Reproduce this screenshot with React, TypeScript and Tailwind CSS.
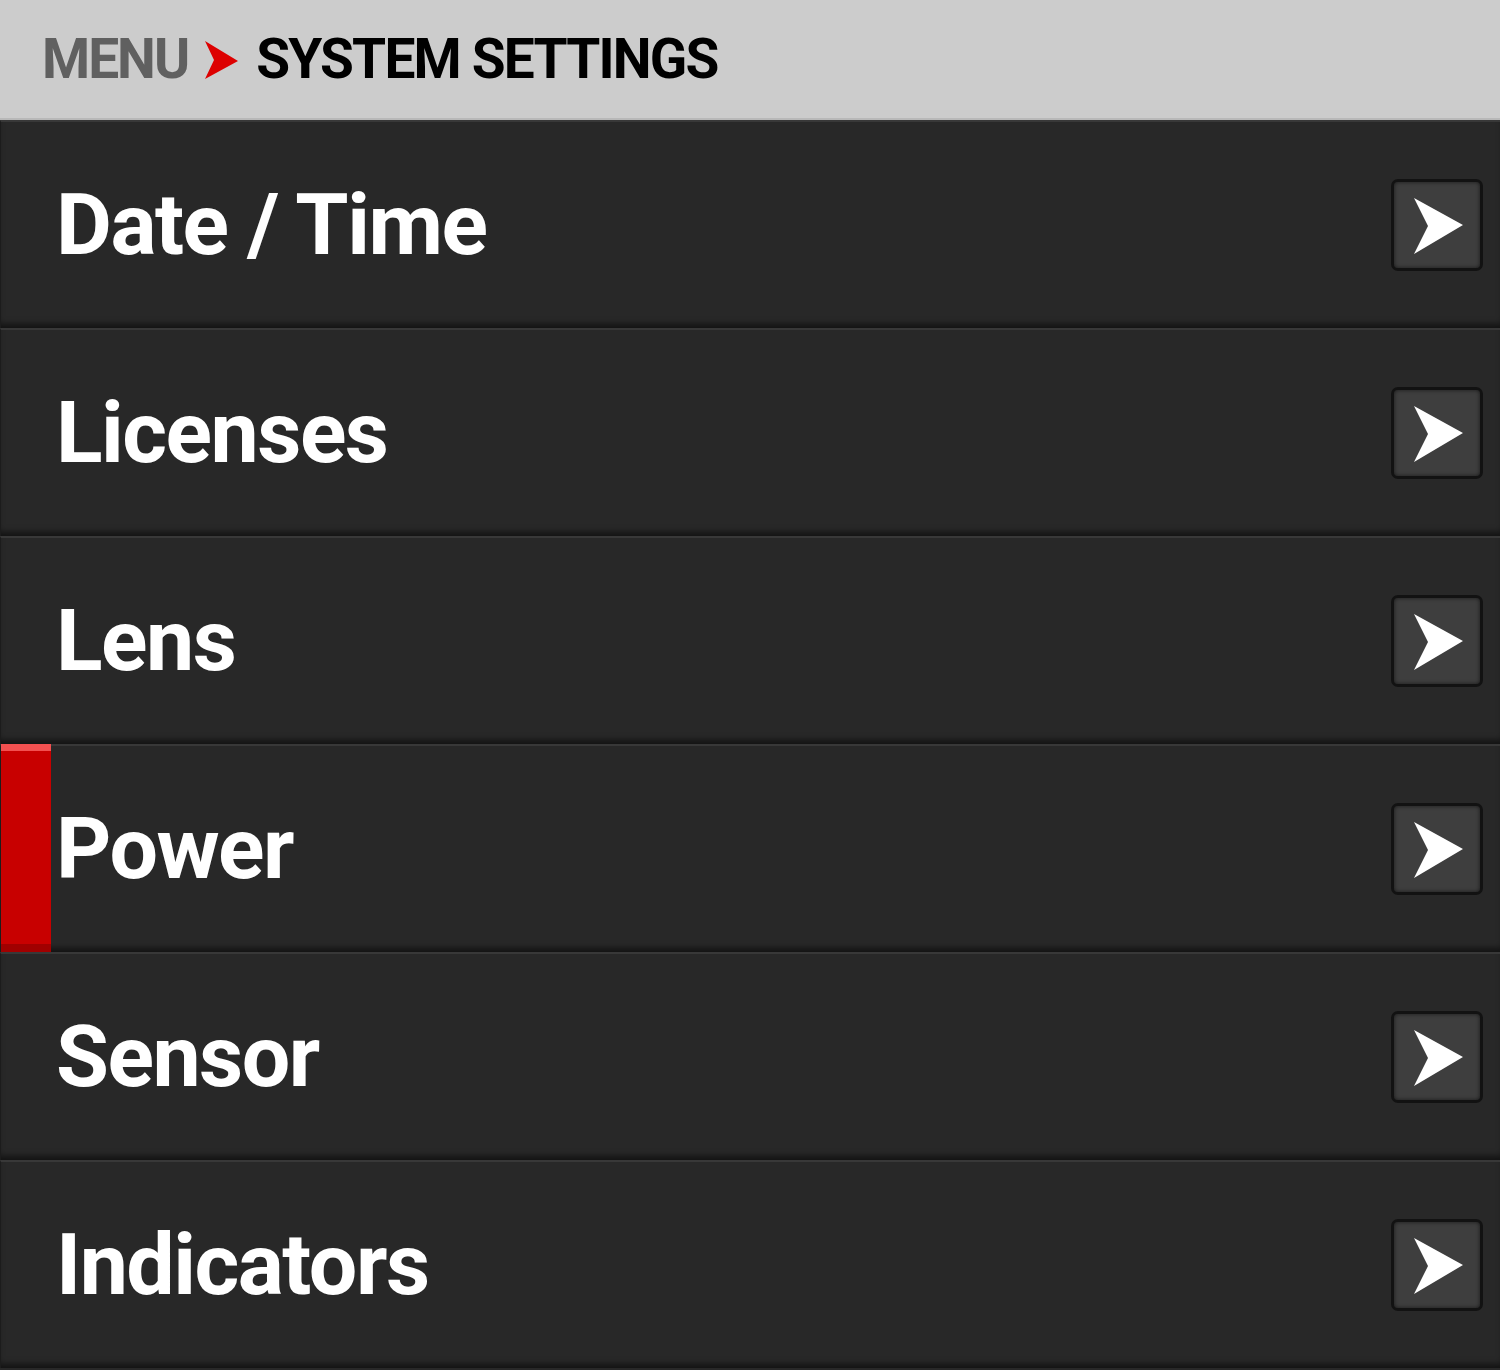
import React from 'react';

const items = ['Date / Time', 'Licenses', 'Lens', 'Power', 'Sensor', 'Indicators'];

const ArrowButton = () => (
    <div className="w-[92px] h-[92px] rounded-[7px] border-[3px] border-[#121212] bg-[#3e3e3e] shadow-[inset_0_0_4px_rgba(0,0,0,0.6)] flex items-center justify-center">
        <svg width="86" height="86" viewBox="0 0 86 86">
            <polygon points="20,16 69,43 20,72 34,44" fill="#ffffff" />
        </svg>
    </div>
);

export default function App() {
    const selected = 3;

    return (
        <div className="w-[1500px] h-[1370px] bg-[#282828] flex flex-col overflow-hidden" style={{ fontFamily: 'Roboto, "Liberation Sans", sans-serif' }}>
            {/* Breadcrumb header */}
            <div className="h-[120px] shrink-0 bg-[#cccccc] border-b-2 border-[#b8b8b8] flex items-center pl-[42px] gap-[17px]">
                <span className="text-[55px] font-bold text-[#606060] tracking-[-2px]">MENU</span>
                <svg width="34" height="38" viewBox="0 0 34 38" className="mt-[2px]">
                    <polygon points="0,0 33,20 0,38 9,19" fill="#dd0000" />
                </svg>
                <span className="text-[55px] font-bold text-black tracking-[-1.8px]">SYSTEM SETTINGS</span>
            </div>

            {/* Menu rows */}
            {items.map((label, i) => (
                <div
                    key={label}
                    className="relative h-[208px] shrink-0 flex items-center border-t-2 border-[#383838] border-l border-l-[#1c1c1c] bg-[#282828] shadow-[inset_0_-7px_6px_-3px_rgba(0,0,0,0.55)]"
                >
                    {i === selected && (
                        <div className="absolute left-0 top-[-2px] bottom-0 w-[50px] flex flex-col">
                            <div className="h-[7px] bg-[#f25050]" />
                            <div className="flex-1 bg-[#c80000]" />
                            <div className="h-[8px] bg-[#a00000]" />
                        </div>
                    )}
                    <span className="pl-[55px] text-[86px] font-bold text-white leading-none tracking-[-1.5px]">{label}</span>
                    <div className="ml-auto mr-[17px]">
                        <ArrowButton />
                    </div>
                </div>
            ))}
        </div>
    );
}
